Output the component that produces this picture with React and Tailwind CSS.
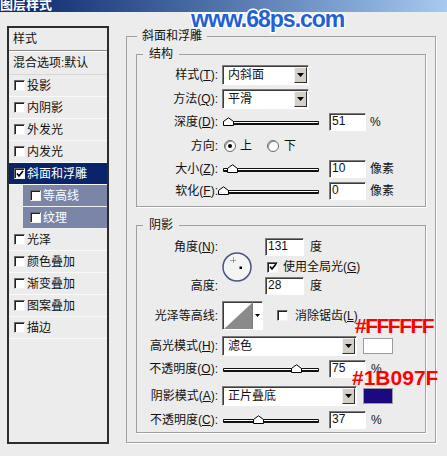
import React from "react";

const effects = [
  { name: "投影" },
  { name: "内阴影" },
  { name: "外发光" },
  { name: "内发光" },
  { name: "斜面和浮雕", checked: true, active: true },
  { name: "等高线", sub: true },
  { name: "纹理", sub: true },
  { name: "光泽" },
  { name: "颜色叠加" },
  { name: "渐变叠加" },
  { name: "图案叠加" },
  { name: "描边" },
];

function CheckBox({ checked }) {
  return (
    <span className="flex h-[11px] w-[11px] shrink-0 items-center justify-center border border-t-[#6a6a6a] border-l-[#6a6a6a] border-r-[#f4f4f4] border-b-[#f4f4f4] bg-white shadow-[inset_1px_1px_0_#202020]">
      {checked && (
        <svg width="8" height="8" viewBox="0 0 8 8">
          <path d="M1 3.5 L3 6 L7 1" fill="none" stroke="#000" strokeWidth="1.7" />
        </svg>
      )}
    </span>
  );
}

function Label({ children }) {
  return <div className="w-[81px] shrink-0 text-right leading-[18px]">{children}</div>;
}

function Field({ value, width }) {
  return (
    <div
      className={`h-[18px] ${width} shrink-0 border border-t-[#7c7c7c] border-l-[#7c7c7c] border-r-[#fff] border-b-[#fff] bg-white pl-[2px] leading-[15px] shadow-[inset_1px_1px_0_#3c3c3c]`}
    >
      {value}
    </div>
  );
}

function Select({ value, width }) {
  return (
    <div
      className={`ml-[4px] flex h-[20px] ${width} shrink-0 border border-t-[#7c7c7c] border-l-[#7c7c7c] border-r-[#fff] border-b-[#fff] bg-white shadow-[inset_1px_1px_0_#3c3c3c]`}
    >
      <span className="flex-1 pl-[5px] leading-[18px]">{value}</span>
      <span className="m-[1px] flex w-[13px] items-center justify-center border border-t-[#f4f4f4] border-l-[#f4f4f4] border-r-[#303030] border-b-[#303030] bg-[#d4d0c8]">
        <svg width="7" height="4" viewBox="0 0 7 4">
          <path d="M0 0H7L3.5 4Z" fill="#000" />
        </svg>
      </span>
    </div>
  );
}

function Slider({ pos }) {
  return (
    <div className="relative ml-[5px] flex h-[18px] w-[96px] shrink-0 items-center">
      <div className="mt-[2px] h-[4px] w-full rounded-[1px] border border-[#101010] border-b-[2px] bg-white" />
      <svg
        className="absolute top-[4px]"
        style={{ left: pos - 5 }}
        width="11"
        height="9"
        viewBox="0 0 11 9"
      >
        <path d="M0.5 8.5V4.5L5.5 0.8L10.5 4.5V8.5Z" fill="#fff" stroke="#000" strokeWidth="1" />
      </svg>
    </div>
  );
}

function Radio({ on }) {
  return (
    <span className="flex h-[12px] w-[12px] shrink-0 items-center justify-center rounded-full border border-[#6a6a6a] bg-white shadow-[inset_1px_1px_0_#9a9a9a]">
      {on && <span className="h-[4px] w-[4px] rounded-full bg-black" />}
    </span>
  );
}

function LeftPanel() {
  return (
    <div className="h-[418px] w-[102px] shrink-0 border-2 border-[#2c2c2c]">
      <div className="h-[23px] border-b border-[#8c8c8c] pl-[4px] leading-[22px]">样式</div>
      <div className="h-[24px] border-t border-b border-t-white border-b-[#d6d6d6] pl-[4px] leading-[22px]">
        混合选项:默认
      </div>
      {effects.map((e) => (
        <div key={e.name} className="flex h-[22px]">
          <div
            className={
              e.active
                ? "flex flex-1 items-center gap-[2px] border-b border-[#fafafa] bg-[#0a246a] pl-[5px] text-white"
                : e.sub
                ? "ml-[14px] flex flex-1 items-center gap-[2px] border-b border-[#eef0f6] bg-[#7a85a8] pl-[7px] text-white"
                : "flex flex-1 items-center gap-[2px] border-b border-[#fafafa] pl-[5px]"
            }
          >
            <CheckBox checked={e.checked} />
            <span>{e.name}</span>
          </div>
        </div>
      ))}
    </div>
  );
}

function AngleDial() {
  return (
    <svg className="ml-[4px] mt-[14px] shrink-0" width="30" height="30" viewBox="0 0 30 30">
      <circle cx="15" cy="15" r="14" fill="#f4f4f2" stroke="#4a5582" strokeWidth="1.5" />
      <path d="M11.5 5.5v6M8.5 8.5h6" stroke="#555" strokeWidth="1" strokeDasharray="1 1" />
      <rect x="17.5" y="14.5" width="2.5" height="2.5" fill="#000" />
    </svg>
  );
}

function ContourPreview() {
  return (
    <div className="ml-[4px] flex h-[29px] w-[41px] shrink-0 border border-t-[#7c7c7c] border-l-[#7c7c7c] border-r-[#fff] border-b-[#fff] bg-white shadow-[inset_1px_1px_0_#3c3c3c]">
      <svg className="ml-[1px] mt-[1px]" width="28" height="26" viewBox="0 0 28 26">
        <path d="M0 26L28 0V26Z" fill="#8a8a8a" />
      </svg>
      <span className="flex flex-1 items-center justify-center border-l border-[#7c7c7c]">
        <svg width="5" height="3" viewBox="0 0 5 3">
          <path d="M0 0H5L2.5 3Z" fill="#000" />
        </svg>
      </span>
    </div>
  );
}

function RightPanel() {
  return (
    <fieldset className="ml-[17px] mt-[3px] w-[310px] border border-[#a0a0a0] px-[9px] pb-[9px] shadow-[1px_1px_0_#fff]">
      <legend className="ml-[1px] px-[5px] leading-[14px]">斜面和浮雕</legend>

      <fieldset className="mt-[4px] border border-[#a0a0a0] pb-[6px] shadow-[1px_1px_0_#fff]">
        <legend className="ml-[6px] px-[6px] leading-[14px]">结构</legend>
        <div className="mt-[4px] flex h-[20px] items-center">
          <Label>样式(<u>T</u>):</Label>
          <Select value="内斜面" width="w-[87px]" />
        </div>
        <div className="mt-[4px] flex h-[20px] items-center">
          <Label>方法(<u>Q</u>):</Label>
          <Select value="平滑" width="w-[87px]" />
        </div>
        <div className="mt-[4px] flex h-[18px] items-center">
          <Label>深度(<u>D</u>):</Label>
          <Slider pos={5} />
          <div className="ml-[10px]">
            <Field value="51" width="w-[37px]" />
          </div>
          <span className="ml-[4px]">%</span>
        </div>
        <div className="mt-[6px] flex h-[18px] items-center">
          <Label>方向:</Label>
          <span className="ml-[6px]">
            <Radio on />
          </span>
          <span className="ml-[4px]">上</span>
          <span className="ml-[15px]">
            <Radio />
          </span>
          <span className="ml-[5px]">下</span>
        </div>
        <div className="mt-[5px] flex h-[18px] items-center">
          <Label>大小(<u>Z</u>):</Label>
          <Slider pos={9} />
          <div className="ml-[10px]">
            <Field value="10" width="w-[37px]" />
          </div>
          <span className="ml-[4px]">像素</span>
        </div>
        <div className="mt-[4px] flex h-[18px] items-center">
          <Label>软化(<u>F</u>):</Label>
          <Slider pos={0} />
          <div className="ml-[10px]">
            <Field value="0" width="w-[37px]" />
          </div>
          <span className="ml-[4px]">像素</span>
        </div>
      </fieldset>

      <fieldset className="mt-[11px] border border-[#a0a0a0] pb-[3px] shadow-[1px_1px_0_#fff]">
        <legend className="ml-[6px] px-[6px] leading-[14px]">阴影</legend>
        <div className="mt-[6px] flex">
          <div className="flex w-[81px] shrink-0 flex-col">
            <div className="h-[18px] text-right leading-[18px]">角度(<u>N</u>):</div>
            <div className="mt-[21px] h-[18px] text-right leading-[18px]">高度:</div>
          </div>
          <AngleDial />
          <div className="ml-[13px] flex flex-col">
            <div className="flex h-[18px] items-center">
              <Field value="131" width="w-[39px]" />
              <span className="ml-[6px]">度</span>
            </div>
            <div className="mt-[2px] flex h-[18px] items-center gap-[5px] pl-[2px]">
              <CheckBox checked />
              <span>
                使用全局光(<u>G</u>)
              </span>
            </div>
            <div className="mt-[1px] flex h-[18px] items-center">
              <Field value="28" width="w-[39px]" />
              <span className="ml-[6px]">度</span>
            </div>
          </div>
        </div>
        <div className="mt-[6px] flex h-[29px] items-center">
          <Label>光泽等高线:</Label>
          <ContourPreview />
          <span className="ml-[14px]">
            <CheckBox />
          </span>
          <span className="ml-[7px]">
            消除锯齿(<u>L</u>)
          </span>
        </div>
        <div className="mt-[6px] flex h-[20px] items-center">
          <Label>高光模式(<u>H</u>):</Label>
          <Select value="滤色" width="w-[135px]" />
          <span className="ml-[6px] h-[16px] w-[30px] border border-[#9c9c9c] bg-white" />
        </div>
        <div className="mt-[4px] flex h-[18px] items-center">
          <Label>不透明度(<u>O</u>):</Label>
          <Slider pos={73} />
          <div className="ml-[10px]">
            <Field value="75" width="w-[37px]" />
          </div>
          <span className="ml-[5px]">%</span>
        </div>
        <div className="mt-[8px] flex h-[20px] items-center">
          <Label>阴影模式(<u>A</u>):</Label>
          <Select value="正片叠底" width="w-[135px]" />
          <span className="ml-[6px] h-[16px] w-[30px] border border-[#9c9c9c] bg-[#1b097f]" />
        </div>
        <div className="mt-[5px] flex h-[18px] items-center">
          <Label>不透明度(<u>C</u>):</Label>
          <Slider pos={35} />
          <div className="ml-[10px]">
            <Field value="37" width="w-[37px]" />
          </div>
          <span className="ml-[5px]">%</span>
        </div>
      </fieldset>
    </fieldset>
  );
}

export default function App() {
  return (
    <div className="relative h-[456px] w-[447px] overflow-hidden bg-[#ececec] font-['Liberation_Sans','Noto_Sans_CJK_SC',sans-serif] text-[12px] text-[#111]">
      <div className="h-[14px] bg-linear-to-r from-[#0a246a] to-[#a6caf0]">
        <span className="-mt-[2px] block text-[13px] leading-[14px] font-bold text-white">图层样式</span>
      </div>
      <div className="flex items-start pl-[7px] pt-[14px]">
        <LeftPanel />
        <RightPanel />
      </div>

      <div className="absolute left-[191px] top-[8px] text-[23px] leading-none font-bold tracking-[-1px] text-[#2360d4] [-webkit-text-stroke:3px_#fff] [paint-order:stroke_fill]">
        www.68ps.com
      </div>
      <div className="absolute left-[355px] top-[315px] text-[21px] leading-none font-bold tracking-[-1.5px] text-[#ff0000]">
        #FFFFFF
      </div>
      <div className="absolute left-[352px] top-[367px] text-[21px] leading-none font-bold text-[#ff0000]">
        #1B097F
      </div>
    </div>
  );
}
